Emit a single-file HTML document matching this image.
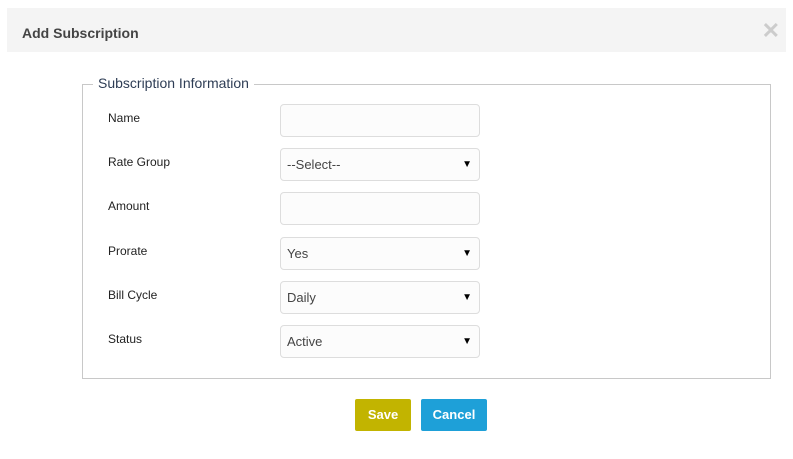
<!DOCTYPE html><html><head><style>
body{margin:0;width:793px;height:459px;background:#fff;font-family:"Liberation Sans",sans-serif;position:relative;overflow:hidden}
.hd{position:absolute;left:7px;top:8px;width:779px;height:44px;background:#f4f4f4}
.hd b{position:absolute;left:15px;top:17px;font-size:14px;color:#444}
.x{position:absolute;right:6px;top:10px;font-size:22px;color:#ccc;font-weight:bold}
.fs{position:absolute;left:82px;top:84px;width:687px;height:293px;border:1px solid #c8c8c8}
.lg{position:absolute;left:93px;top:75px;background:#fff;padding:0 5px;font-size:14px;color:#2e3d55}
.l{position:absolute;left:108px;font-size:12px;color:#222}
.i{position:absolute;left:280px;width:200px;height:33px;border:1px solid #ddd;border-radius:4px;background:#fcfcfc;box-sizing:border-box;font-size:13px;color:#444;padding:8px 6px}
.i span{position:absolute;right:7px;top:10px;font-size:10px;color:#000}
.btn{position:absolute;top:399px;height:32px;color:#fff;font-size:13px;font-weight:bold;text-align:center;line-height:32px;border-radius:2px}
</style></head><body>
<div class="hd"><b>Add Subscription</b><div class="x">✕</div></div>
<div class="fs"></div><div class="lg">Subscription Information</div>
<div class="l" style="top:111px">Name</div><div class="i" style="top:104px"></div>
<div class="l" style="top:155px">Rate Group</div><div class="i" style="top:148px">--Select--<span>▼</span></div>
<div class="l" style="top:199px">Amount</div><div class="i" style="top:192px"></div>
<div class="l" style="top:244px">Prorate</div><div class="i" style="top:237px">Yes<span>▼</span></div>
<div class="l" style="top:288px">Bill Cycle</div><div class="i" style="top:281px">Daily<span>▼</span></div>
<div class="l" style="top:332px">Status</div><div class="i" style="top:325px">Active<span>▼</span></div>
<div class="btn" style="left:355px;width:56px;background:#c2b400">Save</div>
<div class="btn" style="left:421px;width:66px;background:#1ea0d8">Cancel</div>
</body></html>
